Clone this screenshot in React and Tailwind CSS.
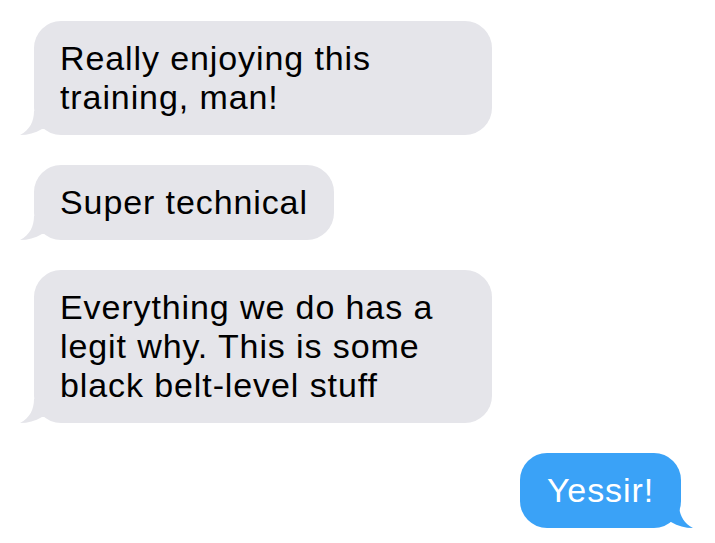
const grayTail = (
  <svg className="absolute -left-[14px] bottom-0" width="30" height="24" viewBox="0 0 30 24">
    <path d="M14 0 C14 10 10 19 0 24 C8 24 15 22 22 18 L30 18 L30 0 Z" fill="#e5e5ea" />
  </svg>
)

const blueTail = (
  <svg className="absolute -right-[12px] bottom-0" width="30" height="24" viewBox="0 0 30 24">
    <path d="M16 0 C16 10 20 19 30 24 C22 24 15 22 8 18 L0 18 L0 0 Z" fill="#3aa2f7" />
  </svg>
)

function Received({ children, width }) {
  return (
    <div className={`relative ml-[34px] rounded-[27px] bg-[#e5e5ea] px-[26px] py-[18px] text-black ${width}`}>
      {grayTail}
      <p className="relative">{children}</p>
    </div>
  )
}

export default function App() {
  return (
    <div
      className="h-[543px] w-[715px] bg-white pt-[21px] text-[34px] leading-[39px] tracking-[0.9px]"
      style={{ fontFamily: '"Liberation Sans", Arial, sans-serif' }}
    >
      <div className="flex flex-col items-start gap-[30px]">
        <Received width="w-[458px]">Really enjoying this training, man!</Received>
        <Received width="w-fit">Super technical</Received>
        <Received width="w-[458px]">Everything we do has a legit why. This is some black belt-level stuff</Received>
      </div>
      <div className="mt-[30px] flex justify-end pr-[34px]">
        <div className="relative rounded-[27px] bg-[#3aa2f7] px-[27px] py-[18px] text-white">
          {blueTail}
          <p className="relative">Yessir!</p>
        </div>
      </div>
    </div>
  )
}
